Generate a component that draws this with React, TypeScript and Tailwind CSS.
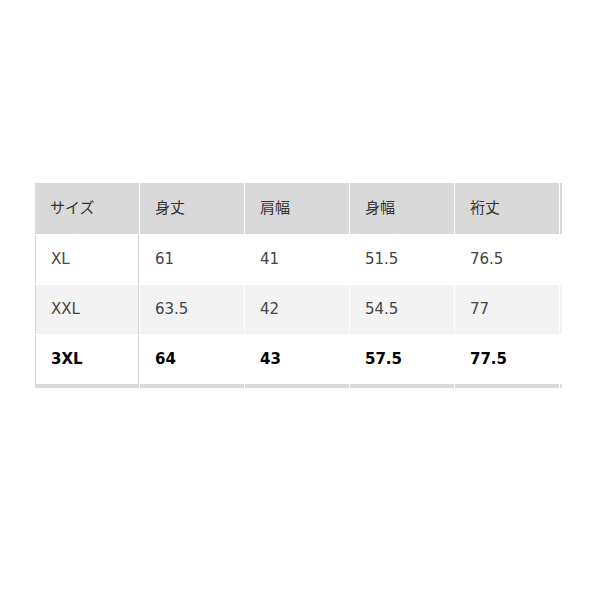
const head = ['サイズ', '身丈', '肩幅', '身幅', '裄丈', ''];
const rows = [
  { cells: ['XL', '61', '41', '51.5', '76.5', ''], bg: 'bg-white', bold: false },
  { cells: ['XXL', '63.5', '42', '54.5', '77', ''], bg: 'bg-[#f3f3f3]', bold: false },
  { cells: ['3XL', '64', '43', '57.5', '77.5', ''], bg: 'bg-white', bold: true },
];

const App = () => {
  return (
    <div
      className="w-[600px] h-[600px] bg-white pt-[183px] pl-[35px]"
      style={{ fontFamily: '"DejaVu Sans", "Noto Sans CJK JP", sans-serif' }}
    >
      <div className="w-[527px] overflow-hidden">
        <div className="grid grid-cols-[repeat(6,104px)] gap-px w-[629px] text-[15px]">
          {head.map((h, i) => (
            <div
              key={'h' + i}
              className="h-[51px] bg-[#d9d9d9] flex items-center pl-[15px] text-[#333]"
            >
              {h}
            </div>
          ))}
          {rows.map((r, ri) =>
            r.cells.map((c, ci) => (
              <div
                key={ri + '-' + ci}
                className={`h-[49px] flex items-center pl-[15px] ${r.bg} ${
                  r.bold ? 'font-bold text-black' : 'text-[#444]'
                } ${ci === 0 ? 'border-l border-r border-[#d4d4d4] pl-[14px]' : ''} ${
                  ri === 2 ? 'h-[53px] border-b-4 border-b-[#d9d9d9]' : ''
                }`}
              >
                {c}
              </div>
            ))
          )}
        </div>
      </div>
    </div>
  );
};

export default App;
